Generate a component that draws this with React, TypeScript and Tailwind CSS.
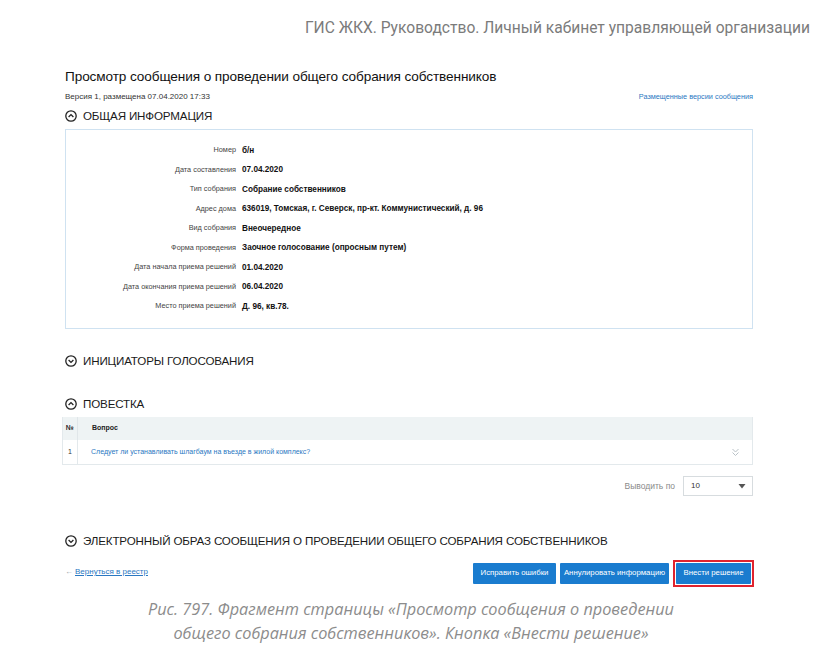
import React from 'react';

const sans = { fontFamily: '"Liberation Sans", Arial, sans-serif' };

const CircleChevron: React.FC<{ up?: boolean }> = ({ up }) => (
  <svg width="12" height="12" viewBox="0 0 12 12" className="shrink-0">
    <circle cx="6" cy="6" r="5.2" fill="none" stroke="#222" strokeWidth="1.3" />
    {up ? (
      <path d="M3.6 7 L6 4.6 L8.4 7" fill="none" stroke="#222" strokeWidth="1.3" />
    ) : (
      <path d="M3.6 5 L6 7.4 L8.4 5" fill="none" stroke="#222" strokeWidth="1.3" />
    )}
  </svg>
);

const SectionTitle: React.FC<{ title: string; up?: boolean; className?: string }> = ({ title, up, className }) => (
  <div className={`flex items-center gap-[6px] h-[18px] ${className ?? ''}`}>
    <CircleChevron up={up} />
    <span className="text-[11.6px] leading-[18px] text-[#1a1a1a] tracking-[-0.15px]">{title}</span>
  </div>
);

const info: [string, string][] = [
  ['Номер', 'б/н'],
  ['Дата составления', '07.04.2020'],
  ['Тип собрания', 'Собрание собственников'],
  ['Адрес дома', '636019, Томская, г. Северск, пр-кт. Коммунистический, д. 96'],
  ['Вид собрания', 'Внеочередное'],
  ['Форма проведения', 'Заочное голосование (опросным путем)'],
  ['Дата начала приема решений', '01.04.2020'],
  ['Дата окончания приема решений', '06.04.2020'],
  ['Место приема решений', 'Д. 96, кв.78.'],
];

export default function App() {
  return (
    <div className="w-[822px] h-[650px] bg-white overflow-hidden" style={sans}>
      <div className="pt-[16px] pr-[12px] text-right">
        <span
          className="text-[15.6px] leading-[22px] text-[#7b7b7b]"
          style={{ fontFamily: 'Roboto, "Noto Sans", sans-serif' }}
        >
          ГИС ЖКХ. Руководство. Личный кабинет управляющей организации
        </span>
      </div>

      <div className="ml-[65px] w-[688px]">
        <h1 className="mt-[28px] text-[13.6px] leading-[18px] text-[#111] tracking-[-0.1px]">
          Просмотр сообщения о проведении общего собрания собственников
        </h1>
        <div className="mt-[6px] flex justify-between items-center text-[8px] leading-[10px]">
          <span className="text-[#333]">Версия 1, размещена 07.04.2020 17:33</span>
          <span className="text-[#2a78c2] text-[7.3px]">Размещенные версии сообщения</span>
        </div>

        <SectionTitle title="ОБЩАЯ ИНФОРМАЦИЯ" up className="mt-[5px]" />

        <div className="mt-[4px] h-[200px] border border-[#cfe2f1] pt-[11px] pb-[11px]">
          {info.map(([label, value]) => (
            <div key={label} className="grid grid-cols-[170px_1fr] gap-x-[6px] h-[19.5px] items-center">
              <span className="text-right text-[7.3px] text-[#444]">{label}</span>
              <span className="text-[8.2px] font-bold text-[#111]">{value}</span>
            </div>
          ))}
        </div>

        <SectionTitle title="ИНИЦИАТОРЫ ГОЛОСОВАНИЯ" className="mt-[23px]" />
        <SectionTitle title="ПОВЕСТКА" up className="mt-[25px]" />

        <div className="mt-[4px] -ml-[3px] border-b border-x border-[#e3e9ec]">
          <div className="flex h-[23px] bg-[#eef3f4] text-[7px] font-bold text-[#222]">
            <div className="w-[15px] flex items-center justify-center border-r border-[#e0e6e9]">№</div>
            <div className="flex-1 flex items-center pl-[14px]">Вопрос</div>
          </div>
          <div className="flex h-[24px] text-[7px]">
            <div className="w-[15px] flex items-center justify-center border-r border-[#e3e9ec] text-[#333]">1</div>
            <div className="flex-1 flex items-center justify-between pl-[13px] pr-[12px]">
              <span className="text-[#2a78c2]">Следует ли устанавливать шлагбаум на въезде в жилой комплекс?</span>
              <svg width="9" height="10" viewBox="0 0 9 10">
                <path d="M1.5 2 L4.5 5 L7.5 2 M1.5 5.5 L4.5 8.5 L7.5 5.5" fill="none" stroke="#b9c2c7" strokeWidth="1" />
              </svg>
            </div>
          </div>
        </div>

        <div className="mt-[11px] flex justify-end items-center gap-[8px]">
          <span className="text-[8.5px] text-[#8a8a8a]">Выводить по</span>
          <div className="w-[70px] h-[20px] border border-[#d7dcdf] flex items-center justify-between pl-[7px] pr-[6px]">
            <span className="text-[8px] text-[#333]">10</span>
            <svg width="8" height="6" viewBox="0 0 8 6">
              <path d="M0.5 1 L7.5 1 L4 5.5 Z" fill="#555" />
            </svg>
          </div>
        </div>

        <SectionTitle title="ЭЛЕКТРОННЫЙ ОБРАЗ СООБЩЕНИЯ О ПРОВЕДЕНИИ ОБЩЕГО СОБРАНИЯ СОБСТВЕННИКОВ" className="mt-[36px]" />

        <div className="mt-[10px] flex items-center justify-between h-[26px]">
          <div className="flex items-center gap-[2px] self-start pt-[6px] text-[8px]">
            <span className="text-[#9aa3a8]">←</span>
            <span className="text-[#2a78c2] underline">Вернуться в реестр</span>
          </div>
          <div className="flex items-center gap-[4px] -mr-[1px]">
            <button className="h-[21px] w-[83px] bg-[#1a7ccf] text-white text-[7.8px] rounded-[1px]">
              Исправить ошибки
            </button>
            <button className="h-[21px] w-[109px] bg-[#1a7ccf] text-white text-[7.8px] rounded-[1px]">
              Аннулировать информацию
            </button>
            <span className="border-2 border-solid border-[#e0232e] flex p-px">
              <button className="h-[21px] w-[75px] bg-[#1a7ccf] text-white text-[7.8px] rounded-[1px]">
                Внести решение
              </button>
            </span>
          </div>
        </div>
      </div>

      <div
        className="mt-[11px] text-center italic text-[16.3px] leading-[24px] text-[#8c8c8c]"
        style={{ fontFamily: '"Open Sans", "Noto Sans", sans-serif' }}
      >
        <div>Рис. 797. Фрагмент страницы «Просмотр сообщения о проведении</div>
        <div>общего собрания собственников». Кнопка «Внести решение»</div>
      </div>
    </div>
  );
}
